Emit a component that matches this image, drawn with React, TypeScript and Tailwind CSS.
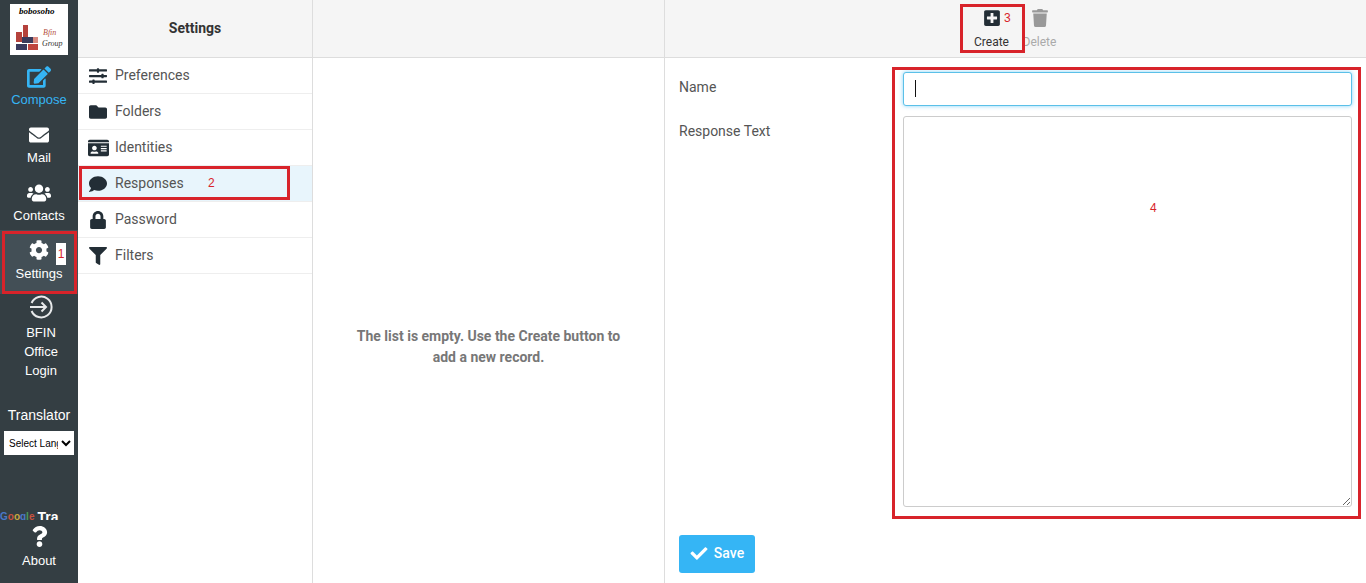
import {
  FaCheck,
  FaCog,
  FaComment,
  FaEdit,
  FaEnvelope,
  FaFilter,
  FaFolder,
  FaIdCard,
  FaLock,
  FaPlusSquare,
  FaQuestion,
  FaSlidersH,
  FaTrash,
  FaUsers,
} from 'react-icons/fa';

const navItems = [
  { label: 'Compose', icon: <FaEdit className="h-[22px] w-[24px]" />, color: 'text-[#35b5f5]' },
  { label: 'Mail', icon: <FaEnvelope className="h-[20px] w-[20px]" />, color: 'text-white' },
  { label: 'Contacts', icon: <FaUsers className="h-[22px] w-[24px]" />, color: 'text-white' },
];

const settingsItems = [
  { label: 'Preferences', icon: <FaSlidersH className="h-[18px] w-[20px]" /> },
  { label: 'Folders', icon: <FaFolder className="h-[18px] w-[20px]" /> },
  { label: 'Identities', icon: <FaIdCard className="h-[20px] w-[21px]" /> },
  { label: 'Responses', icon: <FaComment className="h-[18px] w-[20px]" />, active: true },
  { label: 'Password', icon: <FaLock className="h-[18px] w-[18px]" /> },
  { label: 'Filters', icon: <FaFilter className="h-[18px] w-[20px]" /> },
];

function Logo() {
  return (
    <div className="mb-px mt-1 h-[51px] w-[58px] shrink-0 bg-white">
      <svg viewBox="0 0 58 51" className="h-full w-full">
        <text x="9" y="10" fontSize="9" fontStyle="italic" fontWeight="700" fontFamily="'Liberation Serif', serif" fill="#000">bobosoho</text>
        <rect x="13" y="21" width="5" height="12" fill="#b5423c" />
        <rect x="6" y="28" width="6" height="10" fill="#b5423c" />
        <rect x="12" y="33" width="11" height="6" fill="#3b3b5c" />
        <rect x="23" y="33" width="5" height="6" fill="#d98a80" />
        <rect x="6" y="40" width="11" height="6" fill="#3a3a5e" />
        <rect x="18" y="40" width="10" height="6" fill="#c0453f" />
        <text x="33" y="31" fontSize="8" fontStyle="italic" fontFamily="'Liberation Serif', serif" fill="#b5523f">Bfin</text>
        <text x="32" y="42" fontSize="8" fontStyle="italic" fontFamily="'Liberation Serif', serif" fill="#333">Group</text>
      </svg>
    </div>
  );
}

function LoginIcon() {
  return (
    <svg viewBox="0 0 24 24" className="mb-[4px] h-[24px] w-[24px]" fill="none" stroke="#e8eaeb" strokeWidth="2">
      <path d="M2.6 8A10.4 10.4 0 1 1 2.6 16" />
      <path d="M1 12H17M12.5 7.5L17 12L12.5 16.5" />
    </svg>
  );
}

export default function App() {
  return (
    <div className="relative flex h-screen w-full overflow-hidden bg-white font-['Roboto',sans-serif] text-[14px] text-[#555]">
      <aside className="flex w-[78px] shrink-0 flex-col items-center overflow-hidden bg-[#343e43] font-['Liberation_Sans',sans-serif] text-[13px] text-white">
        <Logo />
        {navItems.map((item) => (
          <div key={item.label} className={`flex h-[58px] w-full flex-col items-center pt-[8px] ${item.color}`}>
            <div className="flex h-[25px] items-center">{item.icon}</div>
            <span className="mt-px leading-[19px]">{item.label}</span>
          </div>
        ))}
        <div className="flex h-[64px] w-full shrink-0 flex-col items-center bg-[#434f56] pt-[7px]">
          <div className="flex h-[25px] items-center">
            <FaCog className="h-[20px] w-[20px]" />
          </div>
          <span className="mt-[2px] leading-[19px]">Settings</span>
        </div>
        <div className="flex w-full flex-col items-center pl-[4px] pt-px leading-[19px]">
          <LoginIcon />
          <span>BFIN</span>
          <span>Office</span>
          <span>Login</span>
        </div>
        <div className="mt-[26px] text-[14px] leading-[18px]">Translator</div>
        <select className="mt-[7px] h-[24px] w-[70px] shrink-0 bg-white pl-px text-[10px] text-black outline-none">
          <option>Select Language</option>
        </select>
        <div className="mt-auto flex h-[12px] w-full shrink-0 items-start overflow-hidden whitespace-nowrap font-bold">
          <span className="mt-[3px] text-[10px] leading-[12px]">
            <span className="text-[#4a78c8]">G</span>
            <span className="text-[#c8523f]">o</span>
            <span className="text-[#c8a83f]">o</span>
            <span className="text-[#4a78c8]">g</span>
            <span className="text-[#4a9a5a]">l</span>
            <span className="text-[#c8523f]">e</span>
          </span>
          <span className="ml-[3px] mt-px text-[14px] leading-[16px]">Tra</span>
        </div>
        <div className="flex h-[63px] w-full shrink-0 flex-col items-center pt-[6px]">
          <FaQuestion className="h-[21px] w-[21px]" />
          <span className="mt-[4px] leading-[19px]">About</span>
        </div>
      </aside>

      <section className="flex w-[235px] shrink-0 flex-col border-r border-[#ddd]">
        <header className="flex h-[58px] shrink-0 items-center justify-center border-b border-[#ddd] bg-[#f5f5f5] text-[14px] font-bold text-[#333]">
          Settings
        </header>
        {settingsItems.map((item) => (
          <div
            key={item.label}
            className={`flex h-[36px] shrink-0 items-center border-b border-[#eee] pl-[9px] ${item.active ? 'bg-[#e8f5fc]' : ''}`}
          >
            <span className="flex w-[28px] justify-center pr-[6px] text-[#232e36]">{item.icon}</span>
            <span>{item.label}</span>
          </div>
        ))}
      </section>

      <section className="flex w-[352px] shrink-0 flex-col border-r border-[#ddd]">
        <header className="h-[58px] shrink-0 border-b border-[#ddd] bg-[#f5f5f5]" />
        <div className="flex flex-1 items-center justify-center px-[40px] pb-[2px] text-center font-bold leading-[21px] text-[#777]">
          <p className="mt-[54px]">The list is empty. Use the Create button to add a new record.</p>
        </div>
      </section>

      <section className="flex min-w-0 flex-1 flex-col">
        <header className="flex h-[58px] shrink-0 items-start justify-center border-b border-[#ddd] bg-[#f5f5f5] pr-[4px] pt-[9px] text-[12px]">
          <div className="flex w-[52px] flex-col items-center text-[#333]">
            <FaPlusSquare className="h-[18px] w-[18px] text-[#232e36]" />
            <span className="mt-[7px] leading-[16px]">Create</span>
          </div>
          <div className="flex w-[44px] flex-col items-center text-[#aaa]">
            <FaTrash className="h-[18px] w-[16px] text-[#999]" />
            <span className="mt-[7px] leading-[16px]">Delete</span>
          </div>
        </header>
        <div className="flex flex-1 flex-col pl-[14px] pr-[14px] pt-[14px]">
          <div className="flex">
            <label className="w-[224px] shrink-0 pt-[7px] leading-[16px]">Name</label>
            <input
              readOnly
              className="h-[34px] w-[449px] rounded-[3px] border border-[#5bc0e8] bg-white px-[11px] shadow-[0_0_4px_rgba(53,181,245,0.6)] outline-none"
            />
          </div>
          <div className="mt-[10px] flex">
            <label className="w-[224px] shrink-0 pt-[7px] leading-[16px]">Response Text</label>
            <textarea
              readOnly
              className="h-[391px] w-[449px] rounded-[3px] border border-[#ccc] bg-white outline-none"
            />
          </div>
          <button className="mt-[28px] flex h-[38px] w-[76px] items-center justify-center gap-[6px] rounded-[3px] bg-[#35b5f5] pb-[2px] font-medium text-white">
            <FaCheck className="h-[17px] w-[18px]" />
            Save
          </button>
        </div>
      </section>

      {/* caret in the name input */}
      <div className="absolute left-[915px] top-[80px] h-[17px] w-px bg-[#111]" />

      {/* red annotations drawn over the screenshot */}
      <div className="absolute left-[2px] top-[231px] h-[63px] w-[75px] border-[3px] border-[#d8232a]" />
      <div className="absolute left-[56px] top-[243px] flex h-[22px] w-[10px] items-center justify-center bg-white font-['Liberation_Sans',sans-serif] text-[12px] text-[#d8232a]">1</div>
      <div className="absolute left-[79px] top-[166px] h-[34px] w-[211px] border-[3px] border-[#d8232a]" />
      <div className="absolute left-[208px] top-[176px] font-['Liberation_Sans',sans-serif] text-[12px] leading-[14px] text-[#d8232a]">2</div>
      <div className="absolute left-[960px] top-[4px] h-[49px] w-[65px] border-[3px] border-[#d8232a]" />
      <div className="absolute left-[1004px] top-[11px] font-['Liberation_Sans',sans-serif] text-[12px] leading-[14px] text-[#d8232a]">3</div>
      <div className="absolute left-[892px] top-[67px] h-[452px] w-[469px] border-[3px] border-[#d8232a]" />
      <div className="absolute left-[1150px] top-[201px] font-['Liberation_Sans',sans-serif] text-[12px] leading-[14px] text-[#d8232a]">4</div>
    </div>
  );
}
